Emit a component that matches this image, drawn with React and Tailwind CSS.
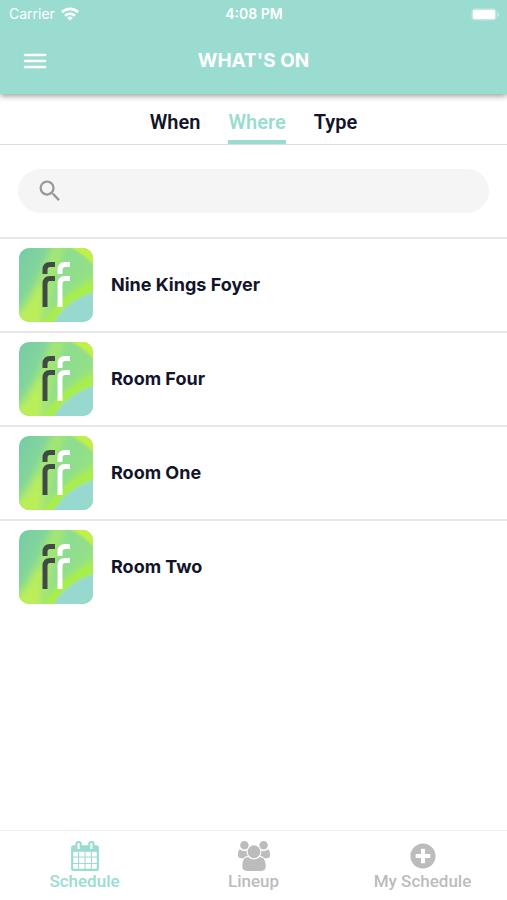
import React, { useState } from "react";
import { MdSearch } from "react-icons/md";
import { FaPlusCircle } from "react-icons/fa";

const tabs = ["When", "Where", "Type"];

const rooms = ["Nine Kings Foyer", "Room Four", "Room One", "Room Two"];

const WifiIcon = () => (
  <svg viewBox="0 0 18 14" className="w-[18px] h-[14px]" fill="none" stroke="currentColor" strokeWidth="2.6">
    <path d="M1 5.2a11.4 11.4 0 0 1 16 0" />
    <path d="M4.1 8.7a7 7 0 0 1 9.8 0" />
    <path d="M9 13.6 6.2 10.9a4 4 0 0 1 5.600 0z" fill="currentColor" stroke="none" />
  </svg>
);

const BatteryIcon = () => (
  <svg viewBox="0 0 28 13" className="w-7 h-[13px]" fill="currentColor">
    <rect x="0.5" y="0.5" width="25" height="12" rx="3.5" fillOpacity="0.35" />
    <rect x="2" y="2" width="22" height="9" rx="1.5" />
    <path d="M26.5 4.5v4a2 2 0 0 0 0-4z" fillOpacity="0.4" />
  </svg>
);

const MenuIcon = () => (
  <svg viewBox="0 0 24 16" className="w-6 h-4" fill="none" stroke="currentColor" strokeWidth="2.6" strokeLinecap="round">
    <path d="M2 2h20M2 8h20M2 14h20" />
  </svg>
);

const CalendarIcon = () => (
  <svg viewBox="0 0 1664 1792" className="h-[30px] w-7" fill="currentColor">
    <path d="M128 1664h288v-288h-288v288zm352 0h320v-288h-320v288zm-352-352h288v-320h-288v320zm352 0h320v-320h-320v320zm-352-384h288v-288h-288v288zm736 736h320v-288h-320v288zm-384-736h320v-288h-320v288zm768 736h288v-288h-288v288zm-384-352h320v-320h-320v320zm-352-864v-288q0-13-9.5-22.5t-22.5-9.5h-64q-13 0-22.5 9.5t-9.5 22.5v288q0 13 9.5 22.5t22.5 9.5h64q13 0 22.5-9.5t9.5-22.5zm736 864h288v-320h-288v320zm-384-384h320v-288h-320v288zm384 0h288v-288h-288v288zm32-480v-288q0-13-9.5-22.5t-22.5-9.5h-64q-13 0-22.5 9.5t-9.5 22.5v288q0 13 9.5 22.5t22.5 9.5h64q13 0 22.5-9.5t9.5-22.5zm384-64v1280q0 52-38 90t-90 38h-1408q-52 0-90-38t-38-90v-1280q0-52 38-90t90-38h128v-96q0-66 47-113t113-47h64q66 0 113 47t47 113v96h384v-96q0-66 47-113t113-47h64q66 0 113 47t47 113v96h128q52 0 90 38t38 90z" />
  </svg>
);

const GroupIcon = () => (
  <svg viewBox="0 0 1920 1792" className="h-[30px] w-8" fill="currentColor">
    <path d="M593 896q-162 5-265 128h-134q-82 0-138-40.5t-56-118.5q0-353 124-353 6 0 43.5 21t97.5 42.5 119 21.5q67 0 133-23-5 37-5 66 0 139 81 256zm1071 637q0 120-73 189.5t-194 69.5h-874q-121 0-194-69.5t-73-189.5q0-53 3.5-103.5t14-109 26.5-108.5 43-97.5 62-81 85.5-53.5 111.5-20q10 0 43 21.5t73 48 107 48 135 21.5 135-21.5 107-48 73-48 43-21.5q61 0 111.5 20t85.5 53.5 62 81 43 97.5 26.5 108.5 14 109 3.5 103.5zm-1024-1277q0 106-75 181t-181 75-181-75-75-181 75-181 181-75 181 75 75 181zm704 384q0 159-112.5 271.5t-271.5 112.5-271.5-112.5-112.5-271.5 112.5-271.5 271.5-112.5 271.5 112.5 112.5 271.5zm576 225q0 78-56 118.5t-138 40.5h-134q-103-123-265-128 81-117 81-256 0-29-5-66 66 23 133 23 59 0 119-21.5t97.5-42.5 43.5-21q124 0 124 353zm-128-609q0 106-75 181t-181 75-181-75-75-181 75-181 181-75 181 75 75 181z" />
  </svg>
);

const RoomLogo = ({ id }) => (
  <svg viewBox="0 0 74 74" className="w-[74px] h-[74px] shrink-0 rounded-[10px]">
    <defs>
      <linearGradient id={`${id}-base`} x1="0" y1="0" x2="1" y2="0.5">
        <stop offset="0" stopColor="#76cca6" />
        <stop offset="0.5" stopColor="#8bdb94" />
        <stop offset="1" stopColor="#96e284" />
      </linearGradient>
      <filter id={`${id}-soft`} x="-30%" y="-30%" width="160%" height="160%">
        <feGaussianBlur stdDeviation="3" />
      </filter>
      <filter id={`${id}-edge`} x="-20%" y="-20%" width="140%" height="140%">
        <feGaussianBlur stdDeviation="1" />
      </filter>
    </defs>
    <rect width="74" height="74" fill={`url(#${id}-base)`} />
    <g filter={`url(#${id}-soft)`}>
      <path d="M-6 80V68Q12 48 22 24L34 -4H48Q34 34 28 80z" fill="#a2e674" />
      <path d="M-6 82V72Q12 58 19 38L24 40 20 82z" fill="#bcee58" />
      <path d="M26 82Q32 52 78 28V44Q50 54 40 82z" fill="#aaee50" />
    </g>
    <path d="M44 -4Q64 4 78 20V-4z" fill="#c2f04a" filter={`url(#${id}-edge)`} />
    <g filter={`url(#${id}-edge)`}>
      <path d="M24 78Q34 52 78 34V44Q50 54 36 78z" fill="#a8ee4c" />
      <path d="M33 78Q46 52 78 43V78z" fill="#98d9cf" />
    </g>
    <g fill="none" strokeWidth="5">
      <g stroke="#424a45">
        <path d="M26 26V22Q26 16.500 31 16.500H36" />
        <path d="M26 59V36Q26 30.500 31 30.500H36" />
      </g>
      <g stroke="#ffffff">
        <path d="M41 26V22Q41 16.500 46 16.500H51" />
        <path d="M41 59V36Q41 30.500 46 30.500H51" />
      </g>
    </g>
  </svg>
);

const navItems = [
  { label: "Schedule", icon: <CalendarIcon /> },
  { label: "Lineup", icon: <GroupIcon /> },
  { label: "My Schedule", icon: <FaPlusCircle className="w-[26px] h-[26px]" /> },
];

const App = () => {
  const [activeTab, setActiveTab] = useState("Where");
  const [activeNav, setActiveNav] = useState("Schedule");

  return (
    <div className="flex flex-col min-h-screen bg-white font-['Roboto',sans-serif] text-[#12152a]">
      {/* Header */}
      <header className="relative bg-[#9bdcd1] text-white shadow-[0_2px_6px_rgba(0,0,0,0.4)]">
        <div className="grid grid-cols-3 items-center h-7 pl-[9px] pr-2 font-['Inter',sans-serif] text-sm">
          <div className="flex items-center gap-[6px]">
            <span>Carrier</span>
            <WifiIcon />
          </div>
          <span className="text-center font-semibold">4:08 PM</span>
          <div className="flex justify-end">
            <BatteryIcon />
          </div>
        </div>
        <div className="grid grid-cols-[60px_1fr_60px] items-center h-[66px]">
          <button aria-label="Menu" className="flex items-center h-full pl-[23px]">
            <MenuIcon />
          </button>
          <h1 className="text-center font-['Inter',sans-serif] text-[19px] font-bold">WHAT'S ON</h1>
        </div>
      </header>

      {/* Tabs */}
      <div className="flex justify-center gap-7 h-[51px] border-b border-[#dedede]">
        {tabs.map((tab) => (
          <button
            key={tab}
            onClick={() => setActiveTab(tab)}
            className={`pt-[10px] text-[20px] font-semibold border-b-4 ${
              activeTab === tab ? "text-[#9bdcd1] border-[#9bdcd1]" : "border-transparent"
            }`}
          >
            {tab}
          </button>
        ))}
      </div>

      {/* Search */}
      <div className="px-[18px] py-6">
        <label className="flex items-center gap-2 h-11 px-[18px] rounded-full bg-[#f5f5f5]">
          <MdSearch className="w-7 h-7 text-[#999999]" />
          <input type="text" aria-label="Search" className="flex-1 min-w-0 bg-transparent outline-none" />
        </label>
      </div>

      {/* Room List */}
      <ul className="flex-1">
        {rooms.map((room, index) => (
          <li key={room} className="flex items-center gap-[18px] h-[94px] px-[19px] border-t-2 border-[#e8e8e8]">
            <RoomLogo id={`room-${index}`} />
            <span className="font-['Inter',sans-serif] text-lg font-bold">{room}</span>
          </li>
        ))}
      </ul>

      {/* Bottom Navigation */}
      <nav className="grid grid-cols-3 h-[70px] border-t border-[#f0f0f0]">
        {navItems.map(({ label, icon }) => (
          <button
            key={label}
            onClick={() => setActiveNav(label)}
            className={`flex flex-col items-center pt-[9px] text-[17px] leading-5 font-medium ${
              activeNav === label ? "text-[#9bdcd1]" : "text-[#bcbcbc]"
            }`}
          >
            <span className="flex items-center h-[31px]">{icon}</span>
            {label}
          </button>
        ))}
      </nav>
    </div>
  );
};

export default App;
